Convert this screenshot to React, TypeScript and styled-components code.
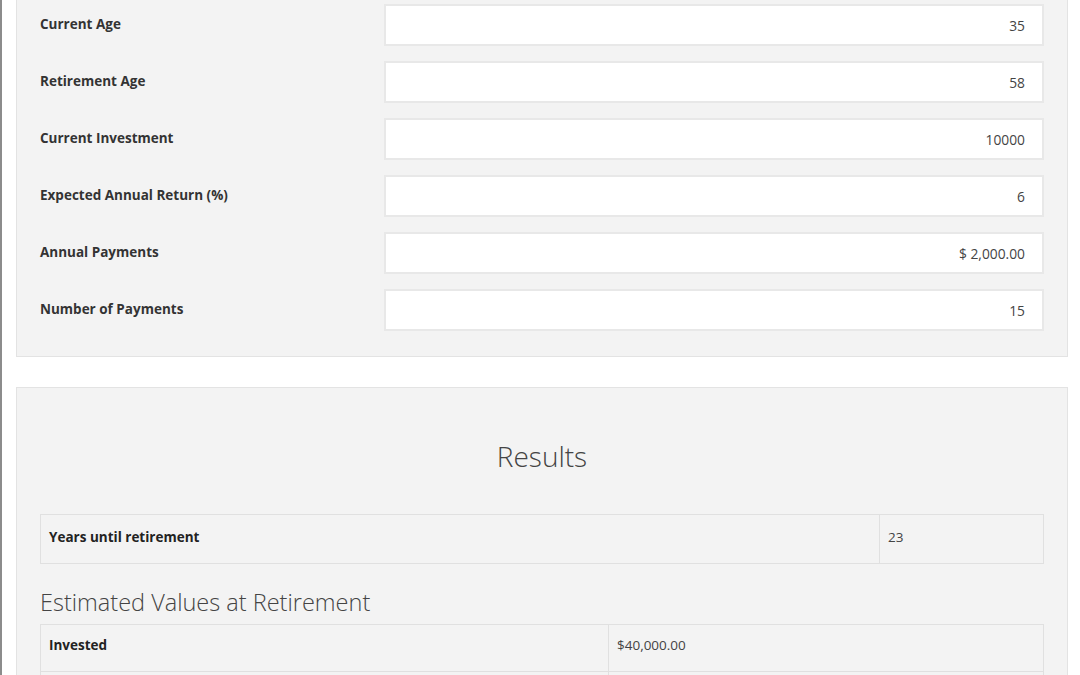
import { createGlobalStyle } from "styled-components";
import styled from "styled-components";
import { Fragment } from "react";

const GlobalStyle = createGlobalStyle`
  html, body {
    margin: 0;
    padding: 0;
    background: #fff;
    font-family: "Open Sans", "Noto Sans", "Liberation Sans", sans-serif;
    color: #333;
    overflow: hidden;
  }
`;

const Page = styled.div`
  border-left: 2px solid #8c8c8c;
  padding: 0 12px 0 14px;
  min-height: 675px;
  box-sizing: border-box;
`;

const Panel = styled.section<{ $cut?: boolean }>`
  background: #f3f3f3;
  border: 1px solid #e3e3e3;
  border-top: ${(p) => (p.$cut ? "none" : "1px solid #e3e3e3")};
  padding: ${(p) => (p.$cut ? "4px 23px 25px" : "23px 23px")};
  margin-bottom: 30px;
`;

const FieldGrid = styled.div`
  display: grid;
  grid-template-columns: 344px 1fr;
  row-gap: 15px;
  align-items: center;
`;

const Label = styled.label`
  font-size: 13.5px;
  font-weight: 700;
  color: #333;
  padding-bottom: 2px;
`;

const Input = styled.input`
  height: 42px;
  box-sizing: border-box;
  border: 2px solid #e8e8e8;
  background: #fff;
  text-align: right;
  padding: 0 17px 0 12px;
  font-family: inherit;
  font-size: 13.8px;
  color: #444;
  outline: none;
  width: 100%;
`;

const Heading = styled.h2`
  margin: 25px 0 38px;
  text-align: center;
  font-size: 28px;
  font-weight: 300;
  color: #444;
  line-height: 40px;
`;

const SubHeading = styled.h3`
  margin: 22px 0 6px;
  font-size: 23.5px;
  font-weight: 300;
  color: #444;
  line-height: 32px;
`;

const Table = styled.table<{ $split: number }>`
  width: 100%;
  border-collapse: collapse;
  table-layout: fixed;
  font-size: 13.5px;
  col:first-child {
    width: ${(p) => p.$split}px;
  }
`;

const Cell = styled.td<{ $head?: boolean; $tall?: boolean }>`
  border: 1px solid #e0e0e0;
  padding: ${(p) => (p.$tall ? "12px 8px 16px" : "10px 8px 16px")};
  font-weight: ${(p) => (p.$head ? 700 : 400)};
  color: ${(p) => (p.$head ? "#222" : "#444")};
  line-height: 20px;
  vertical-align: top;
`;

const fields = [
  { label: "Current Age", value: "35" },
  { label: "Retirement Age", value: "58" },
  { label: "Current Investment", value: "10000" },
  { label: "Expected Annual Return (%)", value: "6" },
  { label: "Annual Payments", value: "$ 2,000.00" },
  { label: "Number of Payments", value: "15" },
];

const estimates = [
  { label: "Invested", value: "$40,000.00" },
  { label: "Total Value", value: "$98,546.31" },
];

export default function App() {
  return (
    <>
      <GlobalStyle />
      <Page>
        <Panel $cut>
          <FieldGrid>
            {fields.map((f) => (
              <Fragment key={f.label}>
                <Label>{f.label}</Label>
                <Input defaultValue={f.value} />
              </Fragment>
            ))}
          </FieldGrid>
        </Panel>
        <Panel>
          <Heading>Results</Heading>
          <Table $split={839}>
            <colgroup>
              <col />
              <col />
            </colgroup>
            <tbody>
              <tr>
                <Cell $head $tall>Years until retirement</Cell>
                <Cell $tall>23</Cell>
              </tr>
            </tbody>
          </Table>
          <SubHeading>Estimated Values at Retirement</SubHeading>
          <Table $split={568}>
            <colgroup>
              <col />
              <col />
            </colgroup>
            <tbody>
              {estimates.map((e) => (
                <tr key={e.label}>
                  <Cell $head>{e.label}</Cell>
                  <Cell>{e.value}</Cell>
                </tr>
              ))}
            </tbody>
          </Table>
        </Panel>
      </Page>
    </>
  );
}
